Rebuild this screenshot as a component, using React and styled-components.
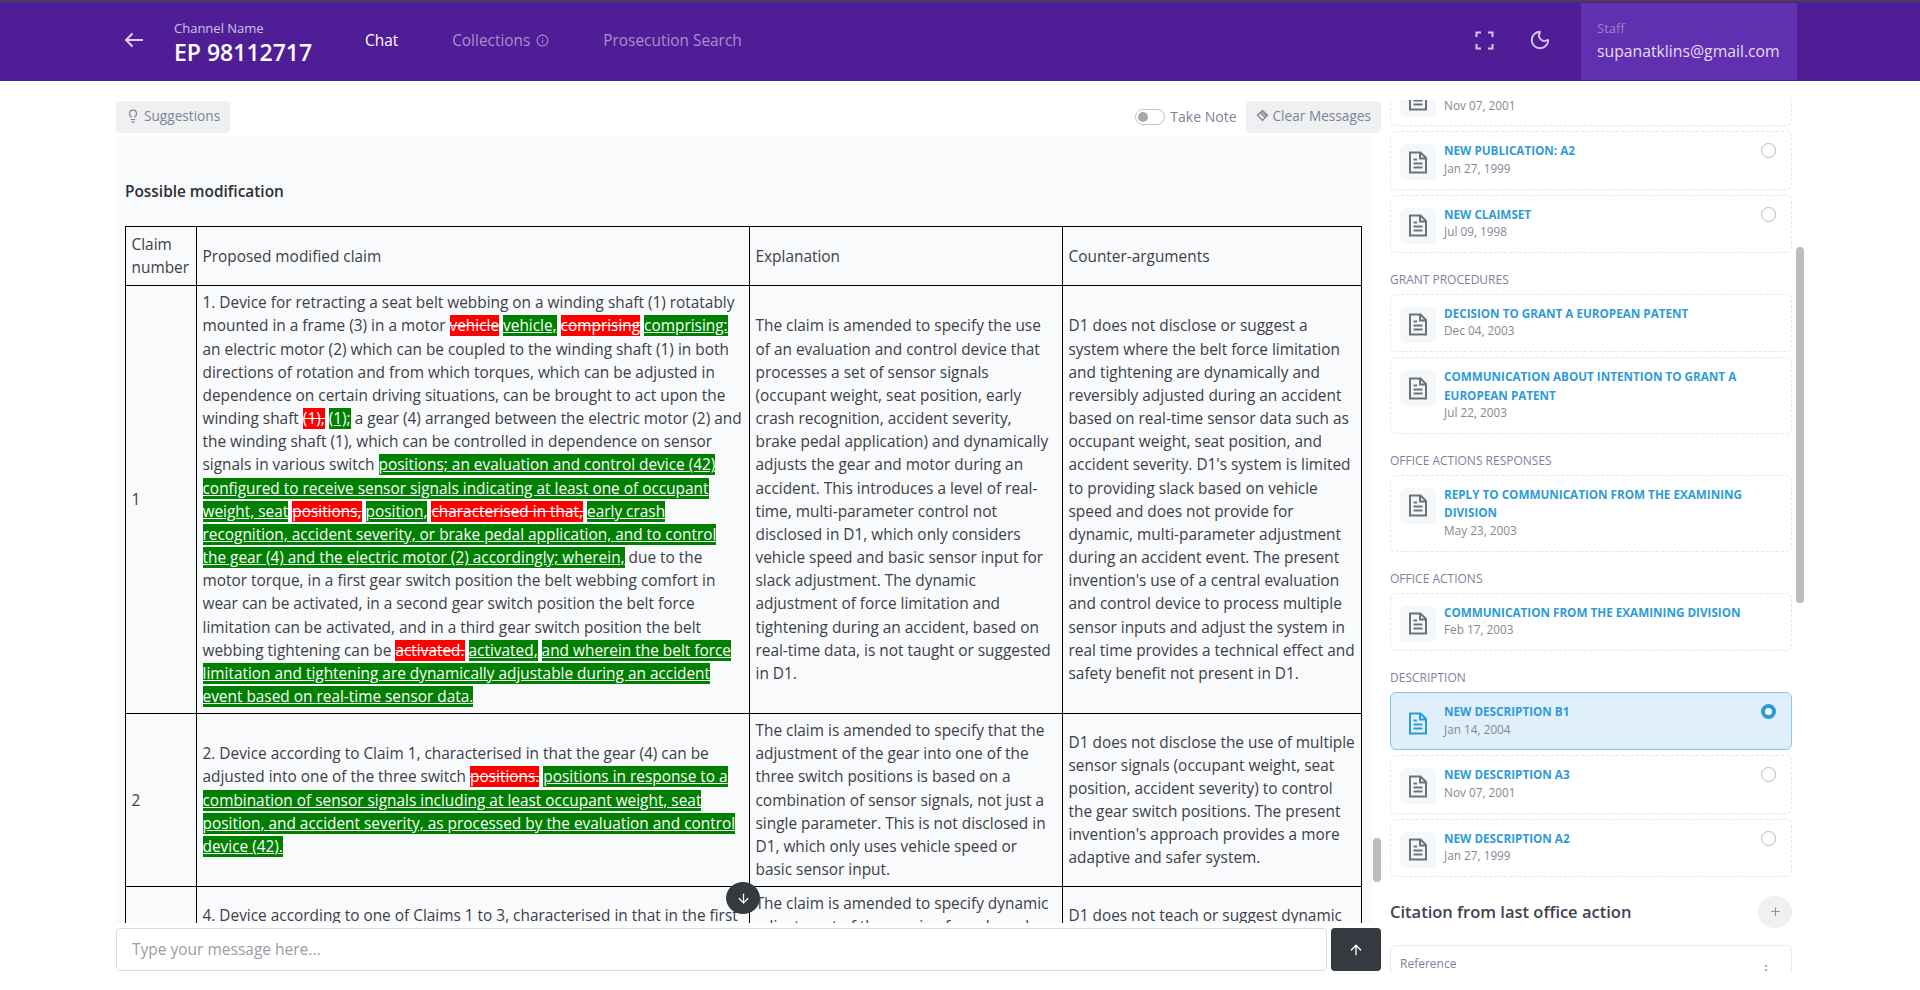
import styled, { createGlobalStyle } from 'styled-components';
import { ArrowDown, ArrowUp, Info, Lightbulb, Moon, Plus } from 'lucide-react';

const GlobalStyle = createGlobalStyle`
  html, body {
    margin: 0;
    padding: 0;
    background: #fff;
    font-family: "Open Sans", "Liberation Sans", sans-serif;
  }
  * { box-sizing: border-box; }
`;

const Page = styled.div`
  width: 1920px;
  height: 990px;
  overflow: hidden;
  display: flex;
  flex-direction: column;
`;

const Header = styled.header`
  height: 81px;
  flex: none;
  display: flex;
  align-items: stretch;
  padding-left: 124px;
  padding-right: 123px;
  background: #4f1d96;
  border-top: 2px solid #4b3a5c;
  color: #fff;
`;

const BackButton = styled.div`
  width: 50px;
  padding-bottom: 3px;
  display: flex;
  align-items: center;
  color: #dccff2;
`;

const Channel = styled.div`
  width: 191px;
  padding-top: 17px;
`;

const ChannelLabel = styled.div`
  font-size: 13px;
  line-height: 18px;
  color: #d0c2ea;
`;

const ChannelName = styled.div`
  font-size: 23px;
  line-height: 30px;
  font-weight: 600;
`;

const Nav = styled.nav`
  display: flex;
  align-items: center;
  gap: 54px;
  flex: 1;
  padding-bottom: 2px;
`;

const NavItem = styled.div`
  display: flex;
  align-items: center;
  gap: 6px;
  font-size: 15.4px;
  color: ${(p) => (p.$active ? '#fff' : '#a68fd0')};
`;

const HeaderIcon = styled.div`
  width: 55px;
  padding-bottom: 3px;
  display: flex;
  align-items: center;
  justify-content: center;
  color: #d6c6f3;
`;

const UserBox = styled.div`
  width: 216px;
  margin: 1px 0 1px 14px;
  padding: 16px 16px 0;
  background: #6030b0;
`;

const UserRole = styled.div`
  font-size: 13px;
  line-height: 18px;
  color: #9a80cc;
`;

const UserEmail = styled.div`
  margin-top: 3px;
  font-size: 15.75px;
  line-height: 22px;
  color: #e6ddf6;
`;

const Body = styled.div`
  flex: 1;
  min-height: 0;
  display: flex;
  gap: 9px;
  padding: 19px 0 0 116px;
`;

const ChatColumn = styled.main`
  position: relative;
  width: 1265px;
  height: 871px;
  display: flex;
  flex-direction: column;
`;

const Toolbar = styled.div`
  display: flex;
  align-items: center;
  height: 33px;
  flex: none;
`;

const ToolButton = styled.div`
  height: 32px;
  display: flex;
  align-items: center;
  gap: 4px;
  padding: 0 10px 2px;
  border-radius: 4px;
  background: #eff0f2;
  color: #7e8299;
  font-size: 13.65px;
`;

const NoteToggle = styled.div`
  display: flex;
  align-items: center;
  gap: 5px;
  margin-left: auto;
  margin-right: 9px;
  color: #7e8299;
  font-size: 14px;
`;

const ToggleTrack = styled.div`
  width: 30px;
  height: 16px;
  border: 1px solid #c4c5cc;
  border-radius: 8px;
  padding: 2px 0 0 2px;
  &::before {
    content: '';
    display: block;
    width: 10px;
    height: 10px;
    border-radius: 50%;
    background: #a7a8ae;
  }
`;

const Messages = styled.div`
  flex: 1;
  min-height: 0;
  margin: 4px 9px 5px 0;
  padding: 43px 9px 0;
  overflow: hidden;
  background: #f9fafc;
`;

const MessageTitle = styled.div`
  font-size: 15.4px;
  line-height: 23px;
  font-weight: 600;
  color: #2c2f36;
  margin-bottom: 23px;
`;

const Table = styled.table`
  width: 1236px;
  table-layout: fixed;
  border-collapse: collapse;
  font-size: 15.4px;
  line-height: 23.15px;
  color: #3c4048;
`;

const Col = styled.col`
  width: ${(p) => p.$width}px;
`;

const Cell = styled.td`
  border: 1px solid #000;
  padding: 5px 5.5px;
  text-align: left;
  font-weight: 400;
  vertical-align: middle;
`;

const HeadCell = styled(Cell).attrs({ as: 'th' })`
  padding: 6px 5.5px;
`;

const Added = styled.ins`
  background: #008000;
  color: #fff;
  text-decoration: underline;
`;

const Removed = styled.del`
  background: #ff0000;
  color: #fff;
  text-decoration: line-through;
`;

const InputRow = styled.div`
  flex: none;
  height: 43px;
  display: flex;
  gap: 4px;
`;

const MessageInput = styled.input`
  flex: 1;
  height: 43px;
  padding: 0 15px 2px;
  border: 1px solid #d9dadf;
  border-radius: 4px;
  outline: none;
  background: #fff;
  font-family: inherit;
  font-size: 15.5px;
  &::placeholder {
    color: #9a9ca6;
    opacity: 1;
  }
`;

const SendButton = styled.div`
  width: 50px;
  height: 43px;
  display: flex;
  align-items: center;
  justify-content: center;
  border-radius: 4px;
  background: #343a40;
  color: #fff;
`;

const ScrollDown = styled.div`
  position: absolute;
  left: 610px;
  top: 782px;
  width: 34px;
  height: 32px;
  display: flex;
  align-items: center;
  justify-content: center;
  border-radius: 50%;
  background: #343a40;
  color: #fff;
`;

const Thumb = styled.div`
  position: absolute;
  left: ${(p) => p.$left}px;
  top: ${(p) => p.$top}px;
  width: 8px;
  height: ${(p) => p.$height}px;
  border-radius: 4px;
  background: #bcbcbc;
`;

const Sidebar = styled.aside`
  position: relative;
  width: 402px;
  height: 873px;
`;

const SidebarClip = styled.div`
  height: 873px;
  overflow: hidden;
`;

const SidebarInner = styled.div`
  margin-top: -32px;
`;

const GroupLabel = styled.div`
  margin: 18px 0 5px;
  font-size: 12px;
  line-height: 18px;
  color: #7e8299;
`;

const DocItem = styled.div`
  display: flex;
  gap: 8px;
  margin-bottom: 5px;
  padding: 9px 9px 11px;
  border: 1px ${(p) => (p.$active ? 'solid #86c5ec' : 'dashed #e4e6ef')};
  border-radius: 6px;
  background: ${(p) => (p.$active ? '#dff0fb' : '#fff')};
`;

const DocIcon = styled.div`
  flex: none;
  width: 36px;
  height: 36px;
  margin: 3px 0 -3px;
  display: flex;
  align-items: center;
  justify-content: center;
  border-radius: 6px;
  background: ${(p) => (p.$active ? 'transparent' : '#f5f8fa')};
  color: ${(p) => (p.$active ? '#2a9ad9' : '#6f7079')};
`;

const DocText = styled.div`
  flex: 1;
`;

const DocTitle = styled.div`
  font-size: 11.7px;
  line-height: 18.5px;
  font-weight: 700;
  color: #2f9bd8;
  text-transform: uppercase;
`;

const DocDate = styled.div`
  font-size: 11.8px;
  line-height: 17.8px;
  color: #868894;
`;

const Radio = styled.div`
  flex: none;
  width: 15px;
  height: 15px;
  margin: 2px 6px 0 0;
  border-radius: 50%;
  border: ${(p) => (p.$checked ? '4px solid #2a9ad9' : '1px solid #b9bac2')};
  background: #fff;
`;

const CitationRow = styled.div`
  display: flex;
  align-items: center;
  justify-content: space-between;
  margin-top: 18px;
  height: 34px;
  font-size: 16.5px;
  font-weight: 600;
  color: #3f4254;
`;

const AddButton = styled.div`
  width: 34px;
  height: 32px;
  display: flex;
  align-items: center;
  justify-content: center;
  border-radius: 50%;
  background: #eff0f2;
  color: #8d8f9c;
`;

const ReferenceCard = styled.div`
  display: flex;
  justify-content: space-between;
  margin-top: 16px;
  height: 70px;
  padding: 9px 19px 0 9px;
  border: 1px solid #e9eaf0;
  border-radius: 6px;
  font-size: 12px;
  line-height: 18px;
  color: #7e8299;
`;

const Kebab = styled.div`
  padding-top: 6px;
`;

const groups = [
  {
    items: [
      { title: 'New Publication: A3', date: 'Nov 07, 2001' },
      { title: 'New Publication: A2', date: 'Jan 27, 1999', radio: true },
      { title: 'New Claimset', date: 'Jul 09, 1998', radio: true },
    ],
  },
  {
    label: 'GRANT PROCEDURES',
    items: [
      { title: 'Decision to grant a European patent', date: 'Dec 04, 2003' },
      { title: 'Communication about intention to grant a European patent', date: 'Jul 22, 2003' },
    ],
  },
  {
    label: 'OFFICE ACTIONS RESPONSES',
    items: [{ title: 'Reply to communication from the Examining Division', date: 'May 23, 2003' }],
  },
  {
    label: 'OFFICE ACTIONS',
    items: [{ title: 'Communication from the Examining Division', date: 'Feb 17, 2003' }],
  },
  {
    label: 'DESCRIPTION',
    items: [
      { title: 'New Description B1', date: 'Jan 14, 2004', radio: true, active: true },
      { title: 'New Description A3', date: 'Nov 07, 2001', radio: true },
      { title: 'New Description A2', date: 'Jan 27, 1999', radio: true },
    ],
  },
];

function BackArrow() {
  return (
    <svg width="20" height="16" viewBox="0 0 20 16" fill="none" stroke="currentColor" strokeWidth="2">
      <path d="M19 8H2M8.500 1.500 2 8l6.500 6.500" />
    </svg>
  );
}

function FullscreenIcon() {
  return (
    <svg width="19" height="19" viewBox="0 0 19 19" fill="none" stroke="currentColor" strokeWidth="2">
      <path d="M6 1.500H1.500V6M13 1.500h4.500V6M6 17.500H1.500V13M13 17.500h4.500V13" />
    </svg>
  );
}

function EraserIcon() {
  return (
    <svg width="13" height="13" viewBox="0 0 13 13" fill="none" stroke="currentColor" strokeWidth="1.2">
      <path d="M6.500 1.500l5 4.500-5 5.500L1.500 6z" />
      <path d="M4 3.700l5 4.600M5.500 2.600l5 4.400" />
    </svg>
  );
}

function DocGlyph() {
  return (
    <svg width="20" height="23" viewBox="0 0 20 23" fill="none" stroke="currentColor" strokeWidth="2">
      <path d="M2 1.500h10.500L18 7v14.500H2z" />
      <path d="M12 1.500V7.500h6M5.500 8.500h3.500M5.500 12.500h9M5.500 16.500h9" />
    </svg>
  );
}

function DocRow({ title, date, radio, active }) {
  return (
    <DocItem $active={active}>
      <DocIcon $active={active}>
        <DocGlyph />
      </DocIcon>
      <DocText>
        <DocTitle>{title}</DocTitle>
        <DocDate>{date}</DocDate>
      </DocText>
      {radio && <Radio $checked={active} />}
    </DocItem>
  );
}

export default function App() {
  return (
    <Page>
      <GlobalStyle />
      <Header>
        <BackButton>
          <BackArrow />
        </BackButton>
        <Channel>
          <ChannelLabel>Channel Name</ChannelLabel>
          <ChannelName>EP 98112717</ChannelName>
        </Channel>
        <Nav>
          <NavItem $active>Chat</NavItem>
          <NavItem>
            Collections <Info size={13} />
          </NavItem>
          <NavItem>Prosecution Search</NavItem>
        </Nav>
        <HeaderIcon>
          <FullscreenIcon />
        </HeaderIcon>
        <HeaderIcon>
          <Moon size={22} strokeWidth={2} />
        </HeaderIcon>
        <UserBox>
          <UserRole>Staff</UserRole>
          <UserEmail>supanatklins@gmail.com</UserEmail>
        </UserBox>
      </Header>
      <Body>
        <ChatColumn>
          <Toolbar>
            <ToolButton>
              <Lightbulb size={14} />
              Suggestions
            </ToolButton>
            <NoteToggle>
              <ToggleTrack />
              Take Note
            </NoteToggle>
            <ToolButton>
              <EraserIcon />
              Clear Messages
            </ToolButton>
          </Toolbar>
          <Messages>
            <MessageTitle>Possible modification</MessageTitle>
            <Table>
              <colgroup>
                <Col $width={71} />
                <Col $width={553} />
                <Col $width={313} />
                <Col $width={299} />
              </colgroup>
              <thead>
                <tr>
                  <HeadCell>Claim number</HeadCell>
                  <HeadCell>Proposed modified claim</HeadCell>
                  <HeadCell>Explanation</HeadCell>
                  <HeadCell>Counter-arguments</HeadCell>
                </tr>
              </thead>
              <tbody>
                <tr>
                  <Cell>1</Cell>
                  <Cell>
                    1. Device for retracting a seat belt webbing on a winding shaft (1) rotatably mounted in a frame (3)
                    in a motor <Removed>vehicle</Removed> <Added>vehicle,</Added> <Removed>comprising</Removed>{' '}
                    <Added>comprising:</Added> an electric motor (2) which can be coupled to the winding shaft (1) in
                    both directions of rotation and from which torques, which can be adjusted in dependence on certain
                    driving situations, can be brought to act upon the winding shaft <Removed>(1),</Removed>{' '}
                    <Added>(1);</Added> a gear (4) arranged between the electric motor (2) and the winding shaft (1),
                    which can be controlled in dependence on sensor signals in various switch{' '}
                    <Added>
                      positions; an evaluation and control device (42) configured to receive sensor signals indicating
                      at least one of occupant weight, seat
                    </Added>{' '}
                    <Removed>positions,</Removed> <Added>position,</Added> <Removed>characterised in that,</Removed>{' '}
                    <Added>
                      early crash recognition, accident severity, or brake pedal application, and to control the gear
                      (4) and the electric motor (2) accordingly; wherein,
                    </Added>{' '}
                    due to the motor torque, in a first gear switch position the belt webbing comfort in wear can be
                    activated, in a second gear switch position the belt force limitation can be activated, and in a
                    third gear switch position the belt webbing tightening can be <Removed>activated.</Removed>{' '}
                    <Added>activated,</Added>{' '}
                    <Added>
                      and wherein the belt force limitation and tightening are dynamically adjustable during an accident
                      event based on real-time sensor data.
                    </Added>
                  </Cell>
                  <Cell>
                    The claim is amended to specify the use of an evaluation and control device that processes a set of
                    sensor signals (occupant weight, seat position, early crash recognition, accident severity, brake
                    pedal application) and dynamically adjusts the gear and motor during an accident. This introduces a
                    level of real-time, multi-parameter control not disclosed in D1, which only considers vehicle speed
                    and basic sensor input for slack adjustment. The dynamic adjustment of force limitation and
                    tightening during an accident, based on real-time data, is not taught or suggested in D1.
                  </Cell>
                  <Cell>
                    D1 does not disclose or suggest a system where the belt force limitation and tightening are
                    dynamically and reversibly adjusted during an accident based on real-time sensor data such as
                    occupant weight, seat position, and accident severity. D1's system is limited to providing slack
                    based on vehicle speed and does not provide for dynamic, multi-parameter adjustment during an
                    accident event. The present invention's use of a central evaluation and control device to process
                    multiple sensor inputs and adjust the system in real time provides a technical effect and safety
                    benefit not present in D1.
                  </Cell>
                </tr>
                <tr>
                  <Cell>2</Cell>
                  <Cell>
                    2. Device according to Claim 1, characterised in that the gear (4) can be adjusted into one of the
                    three switch <Removed>positions.</Removed>{' '}
                    <Added>
                      positions in response to a combination of sensor signals including at least occupant weight, seat
                      position, and accident severity, as processed by the evaluation and control device (42).
                    </Added>
                  </Cell>
                  <Cell>
                    The claim is amended to specify that the adjustment of the gear into one of the three switch
                    positions is based on a combination of sensor signals, not just a single parameter. This is not
                    disclosed in D1, which only uses vehicle speed or basic sensor input.
                  </Cell>
                  <Cell>
                    D1 does not disclose the use of multiple sensor signals (occupant weight, seat position, accident
                    severity) to control the gear switch positions. The present invention's approach provides a more
                    adaptive and safer system.
                  </Cell>
                </tr>
                <tr>
                  <Cell>3</Cell>
                  <Cell>
                    4. Device according to one of Claims 1 to 3, characterised in that in the first gear switch position
                    the belt webbing comfort can be activated based on the sensor signals.
                  </Cell>
                  <Cell>
                    The claim is amended to specify dynamic adjustment of the gearing force based on real-time sensor
                    data and the evaluation device.
                  </Cell>
                  <Cell>
                    D1 does not teach or suggest dynamic adjustment of the comfort function based on sensor signals.
                  </Cell>
                </tr>
              </tbody>
            </Table>
          </Messages>
          <InputRow>
            <MessageInput placeholder="Type your message here..." />
            <SendButton>
              <ArrowUp size={16} strokeWidth={2} />
            </SendButton>
          </InputRow>
          <ScrollDown>
            <ArrowDown size={15} strokeWidth={2} />
          </ScrollDown>
          <Thumb $left={1257} $top={738} $height={44} />
        </ChatColumn>
        <Sidebar>
          <SidebarClip>
            <SidebarInner>
              {groups.map((group, i) => (
                <div key={i}>
                  {group.label && <GroupLabel>{group.label}</GroupLabel>}
                  {group.items.map((item) => (
                    <DocRow key={item.title} {...item} />
                  ))}
                </div>
              ))}
              <CitationRow>
                Citation from last office action
                <AddButton>
                  <Plus size={13} />
                </AddButton>
              </CitationRow>
              <ReferenceCard>
                Reference
                <Kebab>⋮</Kebab>
              </ReferenceCard>
            </SidebarInner>
          </SidebarClip>
          <Thumb $left={406} $top={147} $height={356} />
        </Sidebar>
      </Body>
    </Page>
  );
}
